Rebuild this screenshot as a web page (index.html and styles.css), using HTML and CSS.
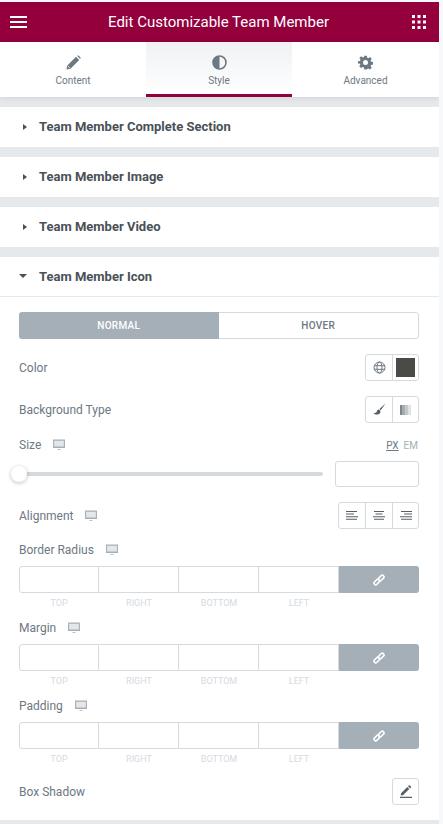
FILE: index.html
```html
<!DOCTYPE html>
<html>
<head>
  <meta charset="UTF-8">
  <title>Edit Customizable Team Member</title>
  <link rel="stylesheet" href="styles.css">
</head>
<body>
  <svg class="sprites" width="0" height="0">
    <symbol id="desktop" viewBox="0 0 12 12">
      <path d="M.6 1.100h10.800v7.400H.6z" fill="#e4e7ea" stroke="currentColor" stroke-width="1.100"/>
      <path d="M.6 7.400h10.800v1.200H.6zM4.500 10.200h3v.8h-3z" fill="currentColor"/>
    </symbol>
    <symbol id="link" viewBox="0 0 12 12">
      <g fill="none" stroke="#fff" stroke-width="1.600">
        <rect x="0.600" y="6.300" width="6.400" height="3.400" rx="1.700" transform="rotate(-45 3.800 8)"/>
        <rect x="5" y="2.300" width="6.400" height="3.400" rx="1.700" transform="rotate(-45 8.200 4)"/>
      </g>
    </symbol>
  </svg>

  <div class="panel">
    <header class="topbar">
      <svg class="burger" width="17" height="12" viewBox="0 0 17 12"><path d="M0 0h17v2H0zM0 5h17v2H0zM0 10h17v2H0z" fill="#fff"/></svg>
      <h1>Edit Customizable Team Member</h1>
      <svg class="grid-icon" width="14" height="14" viewBox="0 0 14 14"><path d="M0 0h3v3H0zM5.500 0h3v3h-3zM11 0h3v3h-3zM0 5.500h3v3H0zM5.500 5.500h3v3h-3zM11 5.500h3v3h-3zM0 11h3v3H0zM5.500 11h3v3h-3zM11 11h3v3h-3z" fill="#fff"/></svg>
    </header>

    <nav class="tabs">
      <div class="tab">
        <svg width="15" height="15" viewBox="0 0 15 15"><path d="M0.500 14.500l.8-4L10 1.800l3.200 3.200-8.700 8.700zM11 .8l.8-.3a1 1 0 0 1 1 .2l1.500 1.500a1 1 0 0 1 .2 1l-.3.800z" fill="#6d7882"/><path d="M1.800 11l2.200 2.200" stroke="#fff" stroke-width=".8"/></svg>
        <span>Content</span>
      </div>
      <div class="tab active">
        <svg width="15" height="15" viewBox="0 0 15 15"><circle cx="7.500" cy="7.500" r="6.500" fill="none" stroke="#6d7882" stroke-width="1.600"/><path d="M7.500 1a6.500 6.500 0 0 0 0 13z" fill="#6d7882"/></svg>
        <span>Style</span>
      </div>
      <div class="tab">
        <svg width="15" height="15" viewBox="0 0 24 24"><path fill="#6d7882" fill-rule="evenodd" d="M10 1h4l.6 3.200 1.900.8 2.700-1.800 2.800 2.800-1.800 2.700.8 1.900 3.200.6v4l-3.200.6-.8 1.900 1.800 2.700-2.800 2.800-2.700-1.800-1.900.8L14 23h-4l-.6-3.200-1.900-.8-2.700 1.800-2.800-2.800 1.800-2.700-.8-1.900L0 14v-4l3.200-.6.8-1.900-1.800-2.700 2.800-2.800 2.700 1.800 1.900-.8zM12 8a4 4 0 1 0 0 8 4 4 0 0 0 0-8z"/></svg>
        <span>Advanced</span>
      </div>
    </nav>

    <section class="section">
      <div class="section-head"><i class="caret"></i>Team Member Complete Section</div>
    </section>
    <section class="section">
      <div class="section-head"><i class="caret"></i>Team Member Image</div>
    </section>
    <section class="section">
      <div class="section-head"><i class="caret"></i>Team Member Video</div>
    </section>

    <section class="section open">
      <div class="section-head"><i class="caret down"></i>Team Member Icon</div>

      <div class="section-body">
        <div class="switch">
          <div class="switch-on">NORMAL</div>
          <div class="switch-off">HOVER</div>
        </div>

        <div class="row row-color">
          <label>Color</label>
          <div class="btn-group">
            <div class="btn">
              <svg width="13" height="13" viewBox="0 0 13 13" fill="none" stroke="#6d7882" stroke-width="1"><circle cx="6.500" cy="6.500" r="5.500"/><ellipse cx="6.500" cy="6.500" rx="2.500" ry="5.500"/><path d="M1 4.700h11M1 8.300h11"/></svg>
            </div>
            <div class="btn"><span class="swatch"></span></div>
          </div>
        </div>

        <div class="row row-bg">
          <label>Background Type</label>
          <div class="btn-group">
            <div class="btn">
              <svg width="13" height="13" viewBox="0 0 12 12"><path d="M11.500 .5L6 5.500l1.200 1.200zM5.500 6c-1.500 0-1.700 1-2 2-.2.800-1.500 1.200-3 1.200 1.200 1.800 5 2.300 6.300-.4.300-.8 0-1.800-1.300-2.800z" fill="#556068"/></svg>
            </div>
            <div class="btn"><span class="gradient"></span></div>
          </div>
        </div>

        <div class="row row-size">
          <label>Size <svg class="device"><use href="#desktop"/></svg></label>
          <div class="units"><span class="unit-on">PX</span><span>EM</span></div>
        </div>
        <div class="slider-row">
          <div class="slider"><span class="knob"></span></div>
          <div class="text-input"></div>
        </div>

        <div class="row row-align">
          <label>Alignment <svg class="device"><use href="#desktop"/></svg></label>
          <div class="btn-group">
            <div class="btn"><svg width="12" height="9" viewBox="0 0 12 9"><path d="M0 0h11v1H0zM0 2.600h8v1H0zM0 5.200h12v1H0zM0 7.800h11v1H0z" fill="#556068"/></svg></div>
            <div class="btn"><svg width="12" height="9" viewBox="0 0 12 9"><path d="M1 0h10v1H1zM2.500 2.600h7v1h-7zM0 5.200h12v1H0zM1 7.800h10v1H1z" fill="#556068"/></svg></div>
            <div class="btn"><svg width="12" height="9" viewBox="0 0 12 9"><path d="M1 0h11v1H1zM4 2.600h8v1H4zM0 5.200h12v1H0zM1 7.800h11v1H1z" fill="#556068"/></svg></div>
          </div>
        </div>

        <div class="dimension">
          <label>Border Radius <svg class="device"><use href="#desktop"/></svg></label>
          <div class="dim-inputs">
            <div class="dim-cell"></div><div class="dim-cell"></div><div class="dim-cell"></div><div class="dim-cell"></div>
            <div class="dim-link"><svg width="12" height="12"><use href="#link"/></svg></div>
          </div>
          <div class="dim-labels"><span>TOP</span><span>RIGHT</span><span>BOTTOM</span><span>LEFT</span><span></span></div>
        </div>

        <div class="dimension">
          <label>Margin <svg class="device"><use href="#desktop"/></svg></label>
          <div class="dim-inputs">
            <div class="dim-cell"></div><div class="dim-cell"></div><div class="dim-cell"></div><div class="dim-cell"></div>
            <div class="dim-link"><svg width="12" height="12"><use href="#link"/></svg></div>
          </div>
          <div class="dim-labels"><span>TOP</span><span>RIGHT</span><span>BOTTOM</span><span>LEFT</span><span></span></div>
        </div>

        <div class="dimension">
          <label>Padding <svg class="device"><use href="#desktop"/></svg></label>
          <div class="dim-inputs">
            <div class="dim-cell"></div><div class="dim-cell"></div><div class="dim-cell"></div><div class="dim-cell"></div>
            <div class="dim-link"><svg width="12" height="12"><use href="#link"/></svg></div>
          </div>
          <div class="dim-labels"><span>TOP</span><span>RIGHT</span><span>BOTTOM</span><span>LEFT</span><span></span></div>
        </div>

        <div class="row row-shadow">
          <label>Box Shadow</label>
          <div class="btn-group">
            <div class="btn">
              <svg width="12" height="13" viewBox="0 0 12 13"><path d="M1 8.300L7.300 2l2 2L3 10.300l-2.300.3zM8 1.300l.8-.8a.8.8 0 0 1 1.100 0l1 1a.8.8 0 0 1 0 1.100l-.8.8zM0 11.800h12V13H0z" fill="#556068"/></svg>
            </div>
          </div>
        </div>
      </div>
    </section>
  </div>
</body>
</html>
```

FILE: styles.css
```css
/* Panel sits on a pale editor background, a thin strip is left on top and right */
html, body {
  margin: 0;
  height: 824px;
  overflow: hidden;
}
body {
  background-color: #f7f8f9;
  padding-top: 2px;
  box-sizing: border-box;
  font-family: Roboto, "Liberation Sans", sans-serif;
  color: #6d7882;
}
.sprites {
  position: absolute;
}
.panel {
  width: 439px;
  height: 822px;
  background-color: #e6e9ec;
  overflow: hidden;
}

/* Top bar */
.topbar {
  height: 40px;
  background-color: #93003c;
  display: flex;
  align-items: center;
  justify-content: space-between;
  padding: 0 13px 0 10px;
}
.topbar h1 {
  margin: 0 2px 0 0;
  font-size: 15px;
  font-weight: 400;
  color: #fff;
}
.burger, .grid-icon {
  flex: none;
}

/* Tabs */
.tabs {
  height: 55px;
  display: flex;
  background-color: #fff;
  box-shadow: 0 1px 6px rgba(0, 0, 0, 0.1);
  position: relative;
}
.tab {
  width: 146px;
  display: flex;
  flex-direction: column;
  align-items: center;
  padding-top: 13px;
  box-sizing: border-box;
  font-size: 10px;
  color: #6d7882;
}
.tab:last-child {
  width: 147px;
}
.tab span {
  margin-top: 5px;
}
.tab.active {
  background: linear-gradient(#eff1f3, #fff);
  border-bottom: 3px solid #93003c;
}

/* Collapsible sections */
.section {
  background-color: #fff;
  margin-top: 10px;
}
.section-head {
  height: 40px;
  display: flex;
  align-items: center;
  padding-left: 23px;
  padding-bottom: 1px;
  box-sizing: border-box;
  font-size: 13px;
  font-weight: 700;
  color: #495157;
}
.caret {
  width: 0;
  height: 0;
  margin-right: 12px;
  border-top: 3.5px solid transparent;
  border-bottom: 3.5px solid transparent;
  border-left: 4px solid #495157;
}
.caret.down {
  margin-left: -4px;
  margin-right: 12px;
  border-left: 4.500px solid transparent;
  border-right: 4.500px solid transparent;
  border-top: 4px solid #495157;
  border-bottom: 0;
}
.section.open .section-head {
  border-bottom: 1px solid #e6e9ec;
}
.section-body {
  padding: 15px 20px 15px 19px;
  height: 493px;
}

/* Normal / hover switch */
.switch {
  display: flex;
  height: 27px;
  font-size: 10px;
  font-weight: 500;
  letter-spacing: 0.3px;
  border-radius: 3px;
  overflow: hidden;
}
.switch-on, .switch-off {
  flex: 1;
  display: flex;
  align-items: center;
  justify-content: center;
}
.switch-on {
  background-color: #a4afb7;
  color: #fff;
}
.switch-off {
  border: 1px solid #d5dadf;
  border-left: 0;
  border-radius: 0 3px 3px 0;
  color: #6d7882;
}

/* Control rows */
.row {
  display: flex;
  align-items: center;
  justify-content: space-between;
  height: 27px;
}
label {
  font-size: 12px;
  color: #6d7882;
  display: flex;
  align-items: center;
}
.device {
  width: 12px;
  height: 12px;
  margin-left: 12px;
  color: #a4afb7;
}
.row-color { margin-top: 15px; }
.row-bg { margin-top: 15px; }
.row-size {
  margin-top: 14px;
  height: 16px;
}
.row-align { margin-top: 15px; }
.row-shadow { margin-top: 13px; }

.btn-group {
  display: flex;
  height: 27px;
  border: 1px solid #d5dadf;
  border-radius: 3px;
  box-sizing: border-box;
}
.btn {
  width: 26px;
  box-sizing: border-box;
  display: flex;
  align-items: center;
  justify-content: center;
}
.btn + .btn {
  width: 27px;
  border-left: 1px solid #d5dadf;
}
.btn + .btn:last-child {
  width: 26px;
}
.btn:only-child {
  width: 25px;
}
.swatch {
  width: 19px;
  height: 19px;
  background-color: #4a4b46;
}
.gradient {
  width: 11px;
  height: 10px;
  background: linear-gradient(90deg, #7f858b 0 20%, #a6adb0 20% 45%, #c3cac6 45% 70%, #dfe3e5 70%);
}

/* Size */
.units {
  font-size: 10px;
  color: #a4afb7;
  display: flex;
  gap: 5px;
  padding-right: 1px;
}
.unit-on {
  color: #6d7882;
  text-decoration: underline;
}
.slider-row {
  display: flex;
  align-items: center;
  justify-content: space-between;
  margin-top: 8px;
}
.slider {
  width: 304px;
  height: 4px;
  background-color: #d5dadf;
  border-radius: 2px;
  position: relative;
}
.knob {
  position: absolute;
  left: -8px;
  top: -6px;
  width: 16px;
  height: 16px;
  border-radius: 50%;
  background-color: #fff;
  box-shadow: 0 1px 4px rgba(0, 0, 0, 0.25);
}
.text-input {
  width: 84px;
  height: 26px;
  box-sizing: border-box;
  border: 1px solid #d5dadf;
  border-radius: 3px;
}

/* Four sided inputs */
.dimension {
  margin-top: 13px;
}
.dimension label {
  height: 16px;
}
.dimension + .dimension {
  margin-top: 11px;
}
.dim-inputs {
  display: grid;
  grid-template-columns: repeat(5, 80px);
  height: 27px;
  margin-top: 8px;
}
.dim-cell {
  border: 1px solid #d5dadf;
  border-left: 0;
}
.dim-cell:first-child {
  border-left: 1px solid #d5dadf;
  border-radius: 3px 0 0 3px;
}
.dim-link {
  background-color: #a4afb7;
  border-radius: 0 3px 3px 0;
  display: flex;
  align-items: center;
  justify-content: center;
}
.dim-labels {
  display: grid;
  grid-template-columns: repeat(5, 80px);
  margin-top: 4px;
  font-size: 9px;
  line-height: 12px;
  color: #d5dadf;
  text-align: center;
}
```
